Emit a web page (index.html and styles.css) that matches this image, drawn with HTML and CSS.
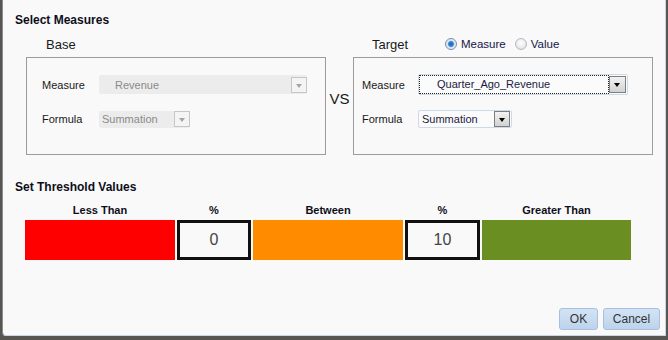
FILE: index.html
```html
<!DOCTYPE html>
<html lang="en">
<head>
    <meta charset="UTF-8">
    <meta name="viewport" content="width=device-width, initial-scale=1.0">
    <title>Select Measures</title>
    <link rel="stylesheet" href="styles.css">
</head>
<body>

    <div class="dialog">
        <h2 class="section-title">Select Measures</h2>

        <div class="measures">
            <div class="panel">
                <div class="panel-head"><span class="panel-name panel-name--base">Base</span></div>
                <div class="panel-box panel-box--base">
                    <div class="field-row">
                        <span class="field-label">Measure</span>
                        <div class="select select--off select--base-measure">
                            <span class="select-text">Revenue</span>
                            <span class="select-btn"></span>
                        </div>
                    </div>
                    <div class="field-row field-row--second">
                        <span class="field-label">Formula</span>
                        <div class="select select--off select--base-formula">
                            <span class="select-text">Summation</span>
                            <span class="select-btn"></span>
                        </div>
                    </div>
                </div>
            </div>

            <div class="vs">VS</div>

            <div class="panel">
                <div class="panel-head panel-head--target">
                    <span class="panel-name panel-name--target">Target</span>
                    <label class="radio"><span class="radio-dot radio-dot--on"></span>Measure</label>
                    <label class="radio"><span class="radio-dot"></span>Value</label>
                </div>
                <div class="panel-box panel-box--target">
                    <div class="field-row">
                        <span class="field-label field-label--target">Measure</span>
                        <div class="select select--on select--target-measure">
                            <span class="select-text select-text--focus">Quarter_Ago_Revenue</span>
                            <span class="select-btn"></span>
                        </div>
                    </div>
                    <div class="field-row field-row--second">
                        <span class="field-label field-label--target">Formula</span>
                        <div class="select select--on select--target-formula">
                            <span class="select-text">Summation</span>
                            <span class="select-btn"></span>
                        </div>
                    </div>
                </div>
            </div>
        </div>

        <h2 class="section-title section-title--threshold">Set Threshold Values</h2>

        <div class="threshold">
            <div class="th-head">Less Than</div>
            <div class="th-head">%</div>
            <div class="th-head">Between</div>
            <div class="th-head">%</div>
            <div class="th-head">Greater Than</div>

            <div class="th-band th-band--red"></div>
            <div class="th-value">0</div>
            <div class="th-band th-band--orange"></div>
            <div class="th-value">10</div>
            <div class="th-band th-band--green"></div>
        </div>

        <div class="actions">
            <button class="btn btn--ok">OK</button>
            <button class="btn btn--cancel">Cancel</button>
        </div>
    </div>

</body>
</html>
```

FILE: styles.css
```css
/* Page and dialog frame */
body {
    margin: 0;
    background-color: #585652;
    font-family: "Liberation Sans", Arial, sans-serif;
    color: #1a1a1a;
}
.dialog {
    box-sizing: border-box;
    display: flex;
    flex-direction: column;
    width: 664px;
    height: 336px;
    margin-left: 2px;
    padding: 12px 0 0 12px;
    background-color: #f9f9f9;
    border-left: 1px solid #8c8c8c;
    border-right: 1px solid #c9d6e4;
    border-bottom: 1px solid #c9d6e4;
    border-bottom-left-radius: 4px;
}
.section-title {
    margin: 0;
    font-size: 12px;
    line-height: 16px;
    font-weight: bold;
    color: #0e0e1a;
}
.section-title--threshold {
    margin-top: 24px;
}

/* Base / Target panels */
.measures {
    display: flex;
    align-items: flex-start;
    margin: 8px 0 0 11px;
}
.panel-head {
    display: flex;
    align-items: center;
    height: 16px;
    margin-bottom: 5px;
    font-size: 13px;
}
.panel-name--base {
    padding-left: 20px;
}
.panel-name--target {
    padding-left: 19px;
    width: 73px;
}
.radio {
    display: flex;
    align-items: center;
    margin-right: 9px;
    font-size: 11.5px;
    color: #15154a;
}
.radio-dot {
    box-sizing: border-box;
    width: 12px;
    height: 12px;
    margin-right: 4px;
    border: 1px solid #b4b9c0;
    border-radius: 50%;
    background: radial-gradient(circle at 50% 40%, #ffffff, #dcdcdc);
}
.radio-dot--on {
    border-color: #7c8da2;
    background: radial-gradient(circle, #1a5fae 0, #3a8ad6 2.5px, #d6e2ef 3.5px, #eef2f6 6px);
}
.panel-box {
    box-sizing: border-box;
    width: 300px;
    height: 98px;
    padding-top: 16px;
    border: 1px solid #9c9c9c;
}
.panel-box--base {
    padding-left: 15px;
}
.panel-box--target {
    padding-left: 8px;
}
.field-row {
    display: flex;
    align-items: center;
    height: 21px;
}
.field-row--second {
    height: 18px;
    margin-top: 15px;
}
.field-label {
    width: 57px;
    font-size: 11px;
}
.field-label--target {
    width: 56px;
}
.vs {
    width: 27px;
    padding-top: 54px;
    font-size: 15px;
    line-height: 18px;
    text-align: center;
}

/* Dropdowns */
.select {
    box-sizing: border-box;
    display: flex;
    align-items: center;
    font-size: 11px;
    border-radius: 2px;
}
.select-text {
    flex: 1;
    white-space: nowrap;
}
.select-btn {
    box-sizing: border-box;
    position: relative;
    width: 16px;
    height: 16px;
}
.select-btn::after {
    content: "";
    position: absolute;
    left: 4px;
    top: 6px;
    border-left: 3.5px solid transparent;
    border-right: 3.5px solid transparent;
    border-top: 4px solid #000;
}
.select--off {
    background-color: #ececec;
    color: #8a8a8a;
}
.select--off .select-btn {
    border: 1px solid #c6c6c6;
    background-color: #f4f4f4;
}
.select--off .select-btn::after {
    border-top-color: #a4a4a4;
}
.select--base-measure {
    width: 208px;
    height: 19px;
}
.select--base-measure .select-text {
    padding-left: 16px;
}
.select--base-formula {
    width: 91px;
    height: 17px;
}
.select--base-formula .select-text {
    padding-left: 3px;
}
.select--on {
    border: 1px solid #cfdae7;
    background-color: #fbfbfb;
    color: #1a1a40;
}
.select--on .select-btn {
    border: 1px solid #7e7e7e;
    background: linear-gradient(#f2f2f2, #d2d2d2);
}
.select--target-measure {
    width: 210px;
    height: 21px;
    padding: 0 1px 0 0;
}
.select-text--focus {
    box-sizing: border-box;
    height: 19px;
    line-height: 17px;
    padding-left: 17px;
    border: 1px dotted #222;
}
.select--target-measure .select-btn {
    width: 17px;
    height: 17px;
}
.select--target-formula {
    width: 94px;
    height: 18px;
    padding-right: 1px;
}
.select--target-formula .select-text {
    padding-left: 3px;
}

/* Threshold bands */
.threshold {
    display: grid;
    grid-template-columns: 150px 74px 150px 75px 149px;
    grid-template-rows: 14px 40px;
    column-gap: 2px;
    row-gap: 3px;
    margin: 8px 0 0 10px;
}
.th-head {
    font-size: 11px;
    line-height: 14px;
    font-weight: bold;
    text-align: center;
    color: #0e0e1a;
}
.th-band--red {
    background-color: #ff0000;
}
.th-band--orange {
    background-color: #ff8c00;
}
.th-band--green {
    background-color: #6b8e23;
}
.th-value {
    box-sizing: border-box;
    border: 3px solid #111;
    background-color: #f9f9f9;
    font-size: 16px;
    line-height: 34px;
    text-align: center;
    color: #444;
}

/* Footer buttons */
.actions {
    display: flex;
    justify-content: flex-end;
    gap: 5px;
    margin-top: auto;
    padding: 0 5px 5px 0;
}
.btn {
    height: 22px;
    padding: 0;
    font-family: "Liberation Sans", Arial, sans-serif;
    font-size: 12px;
    color: #333;
    border: 1px solid #a6c0de;
    border-radius: 3px;
    background: linear-gradient(#d3e3f5, #bdd3ec);
}
.btn--ok {
    width: 39px;
}
.btn--cancel {
    width: 57px;
}
```
